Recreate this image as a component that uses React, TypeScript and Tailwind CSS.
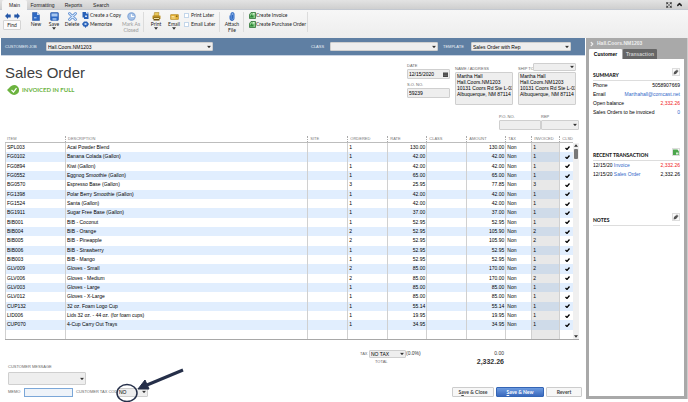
import React from 'react';
import clsx from 'clsx';
import { Expand, ChevronUp, ChevronRight } from 'lucide-react';

type Line = [item: string, description: string, ordered: number, rate: string, amount: string];

const lines: Line[] = [
  ['SPL003', 'Acai Powder Blend', 1, '130.00', '130.00'],
  ['FG0102', 'Banana Colada (Gallon)', 1, '42.00', '42.00'],
  ['FG0894', 'Kiwi (Gallon)', 1, '42.00', '42.00'],
  ['FG0552', 'Eggnog Smoothie (Gallon)', 1, '65.00', '65.00'],
  ['BG0570', 'Espresso Base (Gallon)', 3, '25.95', '77.85'],
  ['FG1398', 'Polar Berry Smoothie (Gallon)', 1, '42.00', '42.00'],
  ['FG1524', 'Santa (Gallon)', 1, '42.00', '42.00'],
  ['BG1911', 'Sugar Free Base (Gallon)', 1, '37.00', '37.00'],
  ['BIB001', 'BIB - Coconut', 1, '52.95', '52.95'],
  ['BIB004', 'BIB - Orange', 2, '52.95', '105.90'],
  ['BIB005', 'BIB - Pineapple', 2, '52.95', '105.90'],
  ['BIB006', 'BIB - Strawberry', 1, '52.95', '52.95'],
  ['BIB003', 'BIB - Mango', 1, '52.95', '52.95'],
  ['GLV009', 'Gloves - Small', 2, '85.00', '170.00'],
  ['GLV006', 'Gloves - Medium', 2, '85.00', '170.00'],
  ['GLV003', 'Gloves - Large', 1, '85.00', '85.00'],
  ['GLV012', 'Gloves - X-Large', 1, '85.00', '85.00'],
  ['CUP132', '32 oz. Foam Logo Cup', 1, '55.14', '55.14'],
  ['LID006', 'Lids 32 oz. - 44 oz. (for foam cups)', 1, '19.95', '19.95'],
  ['CUP070', '4-Cup Carry Out Trays', 1, '34.95', '34.95'],
];

const headings = ['ITEM', 'DESCRIPTION', 'SITE', 'ORDERED', 'RATE', 'CLASS', 'AMOUNT', 'TAX', 'INVOICED', 'CLSD'];

const labelClass = 'text-[4px] leading-[6px] text-[#666] whitespace-nowrap';
const fieldClass = 'border border-[#cfcfcf] rounded-[1px] bg-[#eeeeee] text-[5px] leading-[6px] text-black px-[1px]';

function Caret({ className = '' }: { className?: string }) {
  return (
    <svg viewBox="0 0 6 4" className={clsx('w-[4px] h-[3px]', className)} aria-hidden="true">
      <path d="M0 0h6L3 4z" fill="#333" />
    </svg>
  );
}

function Drop({ id, value = '', className, label }: { id: string; value?: string; className: string; label?: string }) {
  return (
    <span className={clsx('relative block', className)}>
      <select id={id} aria-label={label} defaultValue={value} className={clsx(fieldClass, 'block w-full h-full appearance-none')}>
        <option>{value}</option>
      </select>
      <Caret className="absolute right-[2px] top-1/2 -translate-y-1/2 pointer-events-none" />
    </span>
  );
}

/* Toolbar icons */
function ArrowIcon({ flip = false }: { flip?: boolean }) {
  return (
    <svg viewBox="0 0 10 10" className={clsx('w-[6px] h-[6px]', flip && 'rotate-180')} aria-hidden="true">
      <path d="M0 5l5-5v2.500h4.500v5H5V10z" fill="#2457a8" />
    </svg>
  );
}

function NewIcon() {
  return (
    <svg viewBox="0 0 16 18" className="w-[8px] h-[9px]" aria-hidden="true">
      <path d="M1 1h9l5 5v11H1z" fill="#2e69c4" stroke="#1f4f9e" />
      <path d="M10 1v5h5z" fill="#c8dcf5" />
      <path d="M4 10h5v3H4z" fill="#8db5ec" />
    </svg>
  );
}

function SaveIcon() {
  return (
    <svg viewBox="0 0 18 18" className="w-[9px] h-[9px]" aria-hidden="true">
      <rect x="1" y="1" width="16" height="16" rx="2" fill="#2e69c4" stroke="#1f4f9e" />
      <rect x="3" y="3" width="12" height="6" fill="#a9c8f0" />
      <rect x="5" y="12" width="8" height="5" fill="#8bb2e8" />
    </svg>
  );
}

function DeleteIcon() {
  return (
    <svg viewBox="0 0 18 18" className="w-[9px] h-[9px]" aria-hidden="true">
      <path d="M3 3l12 12M15 3L3 15" stroke="#3f78c9" strokeWidth="5" strokeLinecap="round" />
      <path d="M3 3l12 12M15 3L3 15" stroke="#d4e4f8" strokeWidth="2.500" strokeLinecap="round" />
    </svg>
  );
}

function CopyIcon() {
  return (
    <svg viewBox="0 0 14 14" className="w-[7px] h-[7px]" aria-hidden="true">
      <path d="M1 0h7v3h5v11H4v-3H1z" fill="#2a62b8" />
      <path d="M6 7h4v3H6z" fill="#cfe0f6" />
      <path d="M9 0l4 4V1z" fill="#7fa9e2" />
    </svg>
  );
}

function MemorizeIcon() {
  return (
    <svg viewBox="0 0 14 14" className="w-[7px] h-[7px]" aria-hidden="true">
      <path d="M4 1h6l4 5-3 5H9l-2 3-2-3H3L0 6z" fill="#2a62b8" />
      <path d="M5 4h4v4H5z" fill="#b9d1f2" />
    </svg>
  );
}

function ClosedIcon() {
  return (
    <svg viewBox="0 0 16 16" className="w-[9px] h-[9px]" aria-hidden="true">
      <circle cx="8" cy="8" r="6.500" fill="#a9c4e8" stroke="#86a8d8" strokeWidth="2" />
      <path d="M8 4v4h5" stroke="#fff" strokeWidth="2" fill="none" />
    </svg>
  );
}

function PrintIcon() {
  return (
    <svg viewBox="0 0 18 18" className="w-[9px] h-[9px]" aria-hidden="true">
      <path d="M5 1h9l-1 7H4z" fill="#e8c75b" stroke="#a07b19" />
      <rect x="1" y="7" width="16" height="7" rx="1" fill="#b98e22" />
      <rect x="3" y="11" width="12" height="6" fill="#6f5410" />
      <rect x="4" y="12" width="10" height="2" fill="#f4e3a6" />
    </svg>
  );
}

function EmailIcon() {
  return (
    <svg viewBox="0 0 18 18" className="w-[9px] h-[9px]" aria-hidden="true">
      <rect x="1" y="5" width="16" height="10" rx="1" fill="#e2b036" stroke="#ab7f17" />
      <path d="M3 9h6M3 12h8" stroke="#fff3c4" strokeWidth="1.500" />
      <rect x="12" y="7" width="3" height="3" fill="#8a6714" />
    </svg>
  );
}

function ClipIcon() {
  return (
    <svg viewBox="0 0 12 18" className="w-[6px] h-[9px]" aria-hidden="true">
      <path d="M2 7v6a4 4 0 008 0V4a3 3 0 00-6 0v9a1.500 1.500 0 003 0V6" fill="#7da7e0" stroke="#2e69c4" strokeWidth="2" />
    </svg>
  );
}

function CreateIcon() {
  return (
    <svg viewBox="0 0 14 14" className="w-[7px] h-[7px]" aria-hidden="true">
      <path d="M4 1h9v12H1V5z" fill="#8ccb8b" stroke="#276b2d" strokeWidth="1.500" />
      <path d="M1 11l5-7v3h3v4z" fill="#2f8a38" />
      <path d="M8 2h3v3H8z" fill="#d4efd2" />
    </svg>
  );
}

function Tool({ icon, children, menu, muted }: { icon: React.ReactNode; children: React.ReactNode; menu?: boolean; muted?: boolean }) {
  return (
    <button className={clsx('w-[18px] shrink-0 flex flex-col items-center leading-[6px]', muted && 'text-[#999]')}>
      {icon}
      <span className="whitespace-pre text-center">{children}</span>
      {menu && <Caret />}
    </button>
  );
}

function Rule() {
  return <div className="w-px h-[20px] bg-[#dcdcdc] shrink-0" />;
}

function Toolbar() {
  return (
    <header className="text-[5px] text-[#222]">
      <nav className="h-[10px] flex bg-linear-to-b from-[#e3e3e3] to-[#cfcfcf] border-b border-[#c3c8d0] leading-[10px]">
        <button className="ml-[2px] w-[25px] h-[10px] bg-[#f6f6f6] rounded-t-[2px]">Main</button>
        <button className="w-[31px]">Formatting</button>
        <button className="w-[31px]">Reports</button>
        <button className="w-[24px]">Search</button>
        <div className="ml-auto flex items-center gap-[4px] pr-[5px]">
          <button aria-label="Full screen"><Expand className="w-[6px] h-[6px]" strokeWidth={3} /></button>
          <button aria-label="Collapse"><ChevronUp className="w-[7px] h-[7px]" strokeWidth={5} /></button>
        </div>
      </nav>
      <div className="h-[28px] pt-[2px] pl-[3px] flex items-start bg-linear-to-b from-[#f7f7f7] to-[#ededed] font-[Lato,sans-serif]">
        <div className="w-[18px] mr-[6px] pt-[1px]">
          <div className="flex justify-around mb-[1px]">
            <ArrowIcon />
            <ArrowIcon flip />
          </div>
          <button className="w-full h-[10px] border border-[#d4d4d4] bg-[#fbfbfb] rounded-[1px] leading-[8px]">Find</button>
        </div>
        <Tool icon={<NewIcon />}>New</Tool>
        <Tool icon={<SaveIcon />} menu>Save</Tool>
        <Tool icon={<DeleteIcon />}>Delete</Tool>
        <div className="w-[41px] pl-[1px] flex flex-col gap-[2px]">
          <button className="flex items-center gap-[1px] h-[7px] whitespace-nowrap"><CopyIcon />Create a Copy</button>
          <button className="flex items-center gap-[1px] h-[7px]"><MemorizeIcon />Memorize</button>
        </div>
        <Tool icon={<ClosedIcon />} muted>{'Mark As\nClosed'}</Tool>
        <div className="w-[3px]" />
        <Rule />
        <div className="w-[3px]" />
        <Tool icon={<PrintIcon />} menu>Print</Tool>
        <Tool icon={<EmailIcon />} menu>Email</Tool>
        <div className="w-[36px] pl-[1px] flex flex-col gap-[2px]">
          {['Print Later', 'Email Later'].map((text) => (
            <label key={text} className="flex items-center gap-[2px] h-[7px]">
              <input type="checkbox" className="appearance-none w-[5px] h-[5px] border border-[#c3d6ea] bg-white" />
              {text}
            </label>
          ))}
        </div>
        <Rule />
        <div className="w-[3px]" />
        <Tool icon={<ClipIcon />}>{'Attach\nFile'}</Tool>
        <div className="w-[2px]" />
        <Rule />
        <div className="w-[63px] pl-[5px] flex flex-col gap-[2px]">
          <button className="flex items-center h-[7px] whitespace-nowrap"><CreateIcon />Create Invoice</button>
          <button className="flex items-center h-[7px] whitespace-nowrap"><CreateIcon />Create Purchase Order</button>
        </div>
        <Rule />
      </div>
    </header>
  );
}

function CustomerBar() {
  const barLabel = 'text-[4px] text-[#eef3f8] whitespace-nowrap';
  return (
    <div className="h-[18px] ml-[1px] pl-[4px] pr-[14px] flex items-center bg-[#5f7fa3] border-b border-[#c9d3e2]">
      <label htmlFor="customer" className={clsx(barLabel, 'w-[41px]')}>CUSTOMER:JOB</label>
      <Drop id="customer" value="Hall.Coors.NM1203" className="w-[167px] h-[9px]" />
      <label htmlFor="class" className={clsx(barLabel, 'ml-auto w-[19px]')}>CLASS</label>
      <Drop id="class" className="w-[108px] h-[9px]" />
      <label htmlFor="template" className={clsx(barLabel, 'ml-[5px] w-[28px]')}>TEMPLATE</label>
      <Drop id="template" value="Sales Order with Rep" className="w-[100px] h-[9px]" />
    </div>
  );
}

const address = 'Martha Hall\nHall.Coors.NM1203\n10131 Coors Rd Ste L-03\nAlbuquerque, NM 87114';

function OrderHead() {
  return (
    <div className="h-[79px] flex pl-[5px] pr-[6px]">
      <div className="flex-1 pt-[8px]">
        <h1 className="text-[15px] leading-[17px] text-[#404040]">Sales Order</h1>
        <p className="mt-[4px] ml-[2px] flex items-center gap-[3px] font-[Lato,sans-serif] text-[6px] leading-[10px] font-bold text-[#6cb33f]">
          <svg viewBox="0 0 24 20" className="w-[12px] h-[10px]" aria-hidden="true">
            <path d="M0 10l7-7a10 10 0 110 14z" fill="#6cb33f" />
            <path d="M9 10l4 4 6-8" stroke="#fff" strokeWidth="2.500" fill="none" />
          </svg>
          INVOICED IN FULL
        </p>
      </div>
      <div className="pt-[7px]">
        <div className="flex items-start">
          <div className="w-[43px] mr-[5px] flex flex-col">
            <label htmlFor="date" className={labelClass}>DATE</label>
            <span className="relative">
              <input id="date" defaultValue="12/15/2020" className={clsx(fieldClass, 'block w-full h-[10px]')} />
              <svg viewBox="0 0 10 10" className="absolute right-[2px] top-[3px] w-[5px] h-[5px]" aria-hidden="true">
                <path d="M0 1h10v9H0z" fill="#444" />
                <path d="M1 4h8M1 7h8" stroke="#999" strokeWidth=".7" />
              </svg>
            </span>
            <label htmlFor="so" className={clsx(labelClass, 'mt-[3px]')}>S.O. NO.</label>
            <input id="so" defaultValue="59239" className={clsx(fieldClass, 'h-[10px]')} />
          </div>
          <div className="w-[58px] mr-[5px] pt-[3px] flex flex-col">
            <label htmlFor="address" className={labelClass}>NAME / ADDRESS</label>
            <textarea id="address" wrap="off" defaultValue={address} className={clsx(fieldClass, 'h-[33px] resize-none overflow-hidden')} />
          </div>
          <div className="w-[58px] mr-[3px] flex flex-col">
            <div className="flex items-end h-[9px]">
              <label htmlFor="ship" className={clsx(labelClass, 'w-[15px]')}>SHIP TO</label>
              <Drop id="ship-list" label="Ship to list" className="flex-1 h-[8px] mb-[1px]" />
            </div>
            <textarea id="ship" wrap="off" defaultValue={address} className={clsx(fieldClass, 'h-[33px] resize-none overflow-hidden')} />
          </div>
        </div>
        <div className="mt-[9px] flex justify-end">
          <div className="w-[42px] flex flex-col">
            <label htmlFor="po" className={labelClass}>P.O. NO.</label>
            <input id="po" className={clsx(fieldClass, 'h-[10px]')} />
          </div>
          <div className="w-[38px]">
            <label htmlFor="rep" className={clsx(labelClass, 'block')}>REP</label>
            <Drop id="rep" className="h-[10px]" />
          </div>
        </div>
      </div>
    </div>
  );
}

function Tick() {
  return (
    <svg viewBox="0 0 10 8" className="w-[5px] h-[4px] mx-auto" aria-label="Closed">
      <path d="M1 4l3 3 5-6" stroke="#000" strokeWidth="2.500" fill="none" />
    </svg>
  );
}

function LineTable() {
  const cell = 'border-l border-[#d0d0d0] pl-[1px]';
  return (
    <div className="ml-[5px] mr-[6px] flex items-end border-b border-[#a8a8a8]">
      <table className="flex-1 h-[204px] table-fixed border-separate border-spacing-0 text-[5px] leading-[7px] text-black">
        <colgroup>
          <col className="w-[60px]" />
          <col />
          <col className="w-[40px]" />
          <col className="w-[40px]" />
          <col className="w-[39px]" />
          <col className="w-[40px]" />
          <col className="w-[39px]" />
          <col className="w-[26px]" />
          <col className="w-[28px]" />
          <col className="w-[13px]" />
        </colgroup>
        <thead>
          <tr className="h-[8px]">
            {headings.map((name, i) => (
              <th key={name} className="h-[8px] pt-[1px] border-b border-[#bdbdbd] text-left font-normal text-[4px] leading-[6px] text-[#777]">
                <span className={clsx('block pl-[2px]', i > 0 && 'border-l border-dotted border-[#aaa]')}>{name}</span>
              </th>
            ))}
          </tr>
        </thead>
        <tbody>
          {lines.map(([item, description, ordered, rate, amount], i) => (
            <tr key={item} className={i % 2 ? 'bg-[#e1eefe]' : 'bg-white'}>
              <td className={cell}>{item}</td>
              <td className={cell}>{description}</td>
              <td className={cell} />
              <td className={cell}>{ordered}</td>
              <td className={clsx(cell, 'text-right pr-[1px]')}>{rate}</td>
              <td className={cell} />
              <td className={clsx(cell, 'text-right pr-[1px]')}>{amount}</td>
              <td className={cell}>Non</td>
              <td className={clsx(cell, i % 2 ? 'bg-[#cfdbe9]' : 'bg-[#e8e8e8]')}>{ordered}</td>
              <td className={cell}><Tick /></td>
            </tr>
          ))}
          <tr>
            {headings.map((name) => (
              <td key={name} className={clsx(cell, name === 'INVOICED' && 'bg-[#e8e8e8]')}>&nbsp;</td>
            ))}
          </tr>
        </tbody>
      </table>
      <div className="w-[6px] h-[196px] bg-[#f0f0f0] flex flex-col items-center justify-between py-[1px]">
        <div className="flex flex-col items-center gap-[2px]">
          <Caret className="rotate-180" />
          <div className="w-[4px] h-[10px] bg-[#777] rounded-[1px]" />
        </div>
        <Caret />
      </div>
    </div>
  );
}

function OrderFoot() {
  const button = 'h-[10px] border rounded-[1px] text-[5px] leading-[8px] font-bold';
  return (
    <footer className="px-[8px]">
      <div className="pt-[10px] pr-[73px] flex justify-end items-center">
        <label htmlFor="tax" className={clsx(labelClass, 'w-[9px]')}>TAX</label>
        <Drop id="tax" value="NO TAX" className="w-[37px] h-[8px]" />
        <span className="w-[57px] text-[5px] text-[#333]">(0.0%)</span>
        <span className="w-[41px] text-right text-[5px] text-[#333]">0.00</span>
      </div>
      <div className="pr-[73px] flex justify-end items-center h-[8px]">
        <span className={clsx(labelClass, 'w-[88px]')}>TOTAL</span>
        <strong className="w-[41px] text-right text-[7px] leading-[8px] text-[#333]">2,332.26</strong>
      </div>
      <div className="-mt-[2px] w-[78px]">
        <label htmlFor="message" className={clsx(labelClass, 'block')}>CUSTOMER MESSAGE</label>
        <Drop id="message" className="mt-[2px] h-[13px]" />
      </div>
      <div className="mt-[2px] flex items-center">
        <label htmlFor="memo" className={clsx(labelClass, 'w-[16px]')}>MEMO</label>
        <input id="memo" className="w-[49px] h-[9px] border border-[#7ba7d8] bg-[#eef3f9] text-[5px]" />
        <label htmlFor="code" className={clsx(labelClass, 'ml-[3px] w-[41px]')}>CUSTOMER TAX CODE</label>
        <div className="relative">
          <Drop id="code" value="NO" className="w-[31px] h-[9px]" />
          {/* callout over the tax code */}
          <svg viewBox="0 0 70 38" className="absolute -left-[1px] -top-[21px] w-[70px] h-[38px] pointer-events-none" aria-hidden="true">
            <ellipse cx="11" cy="26" rx="10" ry="8.500" fill="none" stroke="#252f49" strokeWidth="1.500" />
            <path d="M67 3L31 18" stroke="#252f49" strokeWidth="3" />
            <path d="M22 22l7-9 4 9z" fill="#252f49" stroke="#252f49" />
          </svg>
        </div>
        <div className="ml-auto -mr-[5px] flex gap-[2px] font-[Lato,sans-serif]">
          <button className={clsx(button, 'w-[42px] border-[#ccc] bg-[#f7f7f7] text-[#444]')}>S<u>a</u>ve &amp; Close</button>
          <button className={clsx(button, 'w-[48px] border-[#3465b5] bg-linear-to-b from-[#6d9be0] to-[#3a69bd] text-white')}><u>S</u>ave &amp; New</button>
          <button className={clsx(button, 'w-[36px] border-[#ccc] bg-[#f7f7f7] text-[#444]')}>Revert</button>
        </div>
      </div>
    </footer>
  );
}

function PanelTitle({ title, icon }: { title: string; icon: React.ReactNode }) {
  return (
    <div className="flex items-end justify-between border-b border-[#ddd] h-[13px] pb-[1px]">
      <h2 className="font-[Lato,sans-serif] font-black text-[5px] leading-[7px] text-[#222]">{title}</h2>
      <button aria-label={title} className="w-[8px] h-[8px] mb-[3px] border border-[#ddd] bg-[#fafafa] flex items-center justify-center">
        {icon}
      </button>
    </div>
  );
}

function Pencil() {
  return (
    <svg viewBox="0 0 12 12" className="w-[6px] h-[6px] shrink-0" aria-hidden="true">
      <path d="M1 11l1-5 6-5 3 3-5 6z" fill="#555" />
      <path d="M7 2l3 3" stroke="#ddd" />
    </svg>
  );
}

function AddNote() {
  return (
    <svg viewBox="0 0 12 12" className="w-[6px] h-[6px] shrink-0" aria-hidden="true">
      <path d="M0 1h9l3 4v7H0z" fill="#4ca64c" />
      <path d="M6 7h5v4H6z" fill="#d8f0d8" />
    </svg>
  );
}

function SidePanel() {
  const row = 'flex justify-between whitespace-nowrap';
  return (
    <aside className="w-[102px] shrink-0 mb-[3px] px-[3px] pb-[3px] flex flex-col bg-[#a9a9a9] border-r border-[#ccc] text-[5px] text-black">
      <h2 className="h-[11px] flex items-center gap-[2px] font-bold text-[#eee]">
        <ChevronRight className="w-[6px] h-[6px]" strokeWidth={5} />
        Hall.Coors.NM1203
      </h2>
      <div className="flex gap-[1px] leading-[10px] font-bold">
        <button className="w-[33px] h-[10px] bg-white rounded-t-[1px]">Customer</button>
        <button className="w-[34px] h-[10px] bg-[#666] text-[#ccc] rounded-t-[1px]">Transaction</button>
      </div>
      <div className="flex-1 bg-white px-[4px] pt-[9px] leading-[9px]">
        <section className="h-[80px]">
          <PanelTitle title="SUMMARY" icon={<Pencil />} />
          <div className={row}><span>Phone</span><span>5058907669</span></div>
          <div className={row}><span>Email</span><a href="mailto:Marthahall@comcast.net" className="text-[#3268c8]">Marthahall@comcast.net</a></div>
          <div className={row}><span>Open balance</span><span className="text-[#f02020]">2,332.26</span></div>
          <div className={row}><span>Sales Orders to be invoiced</span><a href="#orders" className="text-[#3268c8]">0</a></div>
        </section>
        <section className="h-[65px]">
          <PanelTitle title="RECENT TRANSACTION" icon={<AddNote />} />
          <div className={row}><span>12/15/20 <a href="#invoice" className="text-[#3268c8]">Invoice</a></span><span className="text-[#f02020]">2,332.26</span></div>
          <div className={row}><span>12/15/20 <a href="#order" className="text-[#3268c8]">Sales Order</a></span><span>2,332.26</span></div>
        </section>
        <section>
          <PanelTitle title="NOTES" icon={<Pencil />} />
        </section>
      </div>
    </aside>
  );
}

export default function App() {
  return (
    <div className="min-h-screen flex flex-col bg-white font-['Liberation_Sans',Arial,sans-serif]">
      <Toolbar />
      <div className="flex-1 flex">
        <main className="flex-1 min-w-0 mr-[1px]">
          <CustomerBar />
          <OrderHead />
          <LineTable />
          <OrderFoot />
        </main>
        <SidePanel />
      </div>
    </div>
  );
}
